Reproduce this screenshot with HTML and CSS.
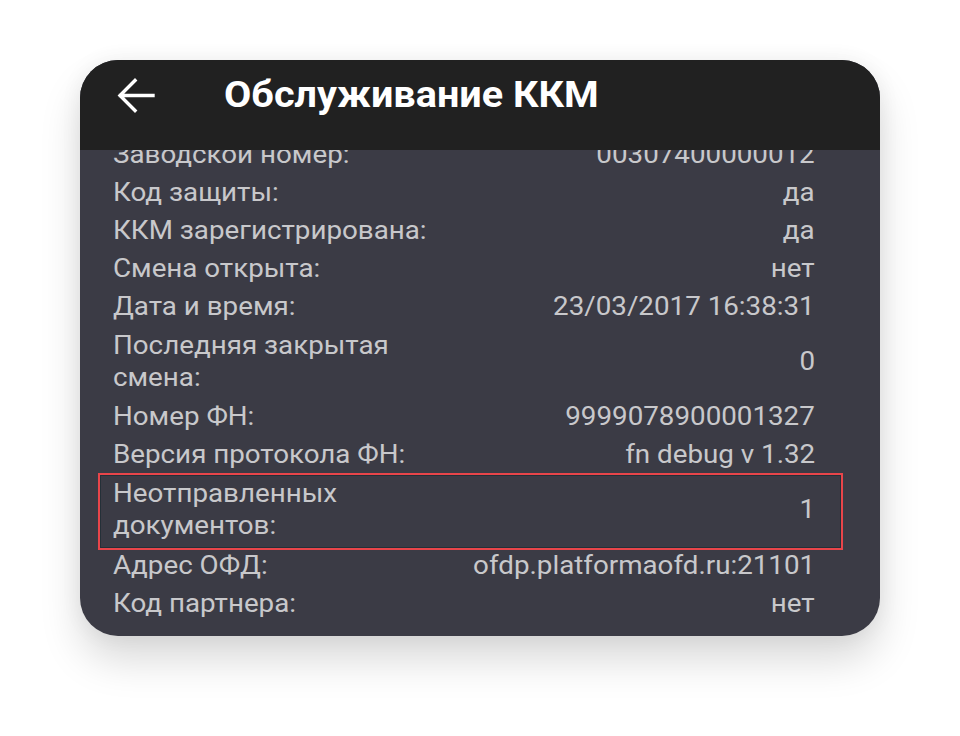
FILE: index.html
```html
<!DOCTYPE html>
<html lang="ru">
<head>
<meta charset="utf-8">
<title>Обслуживание ККМ</title>
<link rel="stylesheet" href="styles.css">
</head>
<body>
<div class="stage">
  <div class="card">
    <header class="bar">
      <svg class="back" width="40" height="40" viewBox="0 0 40 40" aria-hidden="true">
        <path d="M36 18.5H3.5M18 3.5L3 18.5l15 15" fill="none" stroke="#ffffff" stroke-width="3.4" stroke-linecap="square" stroke-linejoin="miter"/>
      </svg>
      <h1 class="title"><span class="wide">Обслуживание ККМ</span></h1>
    </header>
    <div class="body">
      <div class="list">
        <div class="row"><span class="label">Заводской номер:</span><span class="value">00307400000012</span></div>
        <div class="row"><span class="label">Код защиты:</span><span class="value">да</span></div>
        <div class="row"><span class="label">ККМ зарегистрирована:</span><span class="value">да</span></div>
        <div class="row"><span class="label">Смена открыта:</span><span class="value">нет</span></div>
        <div class="row"><span class="label">Дата и время:</span><span class="value">23/03/2017 16:38:31</span></div>
        <div class="row double"><span class="label">Последняя закрытая<br>смена:</span><span class="value">0</span></div>
        <div class="row"><span class="label">Номер ФН:</span><span class="value">9999078900001327</span></div>
        <div class="row"><span class="label">Версия протокола ФН:</span><span class="value">fn debug v 1.32</span></div>
        <div class="row double marked"><span class="label">Неотправленных<br>документов:</span><span class="value">1</span></div>
        <div class="row"><span class="label">Адрес ОФД:</span><span class="value">ofdp.platformaofd.ru:21101</span></div>
        <div class="row"><span class="label">Код партнера:</span><span class="value">нет</span></div>
      </div>
    </div>
  </div>
</div>
</body>
</html>
```
FILE: styles.css
```css
* { box-sizing: border-box; }
html, body { margin: 0; padding: 0; background: #ffffff; }
body { width: 960px; height: 736px; overflow: hidden; font-family: Roboto, "Noto Sans", sans-serif; }

.stage {
  padding: 60px 80px 0 80px;
}

.card {
  width: 800px;
  height: 576px;
  border-radius: 38px;
  overflow: hidden;
  background: #3b3b45;
  box-shadow: 0 24px 40px rgba(0,0,0,0.15), 0 0 22px rgba(0,0,0,0.06);
  display: flex;
  flex-direction: column;
}

.bar {
  height: 90px;
  flex: none;
  background: #212121;
  display: flex;
  align-items: flex-start;
  padding: 0 0 0 37px;
  position: relative;
  z-index: 1;
}

.back { display: block; margin-top: 17px; flex: none; }

.title {
  margin: 14px 0 0 67px;
  font-size: 36px;
  line-height: 42px;
  font-weight: 700;
  color: #ffffff;
}
.wide {
  display: inline-block;
  transform: scaleX(1.1);
  transform-origin: left center;
}

.body {
  flex: 1;
  overflow: hidden;
  padding: 0 65px 0 33px;
}

.list { margin-top: -14px; }

.row {
  display: flex;
  justify-content: space-between;
  align-items: center;
  padding: 3px 0;
  font-size: 25px;
  line-height: 32px;
  color: #c8c8cb;
  position: relative;
}
.row.double { padding: 4px 0; }

.label {
  flex: none;
  display: inline-block;
  transform: scaleX(1.11);
  transform-origin: left center;
}
.value {
  display: inline-block;
  text-align: right;
  transform: scaleX(1.11);
  transform-origin: right center;
}

.row.marked { padding: 4px 0 5px; }
.row.marked::after {
  content: "";
  position: absolute;
  left: -15px;
  right: -28px;
  top: -1px;
  bottom: -3px;
  border: 2px solid #e8454a;
  box-shadow: inset 0 0 0 1px #243038;
}
```
